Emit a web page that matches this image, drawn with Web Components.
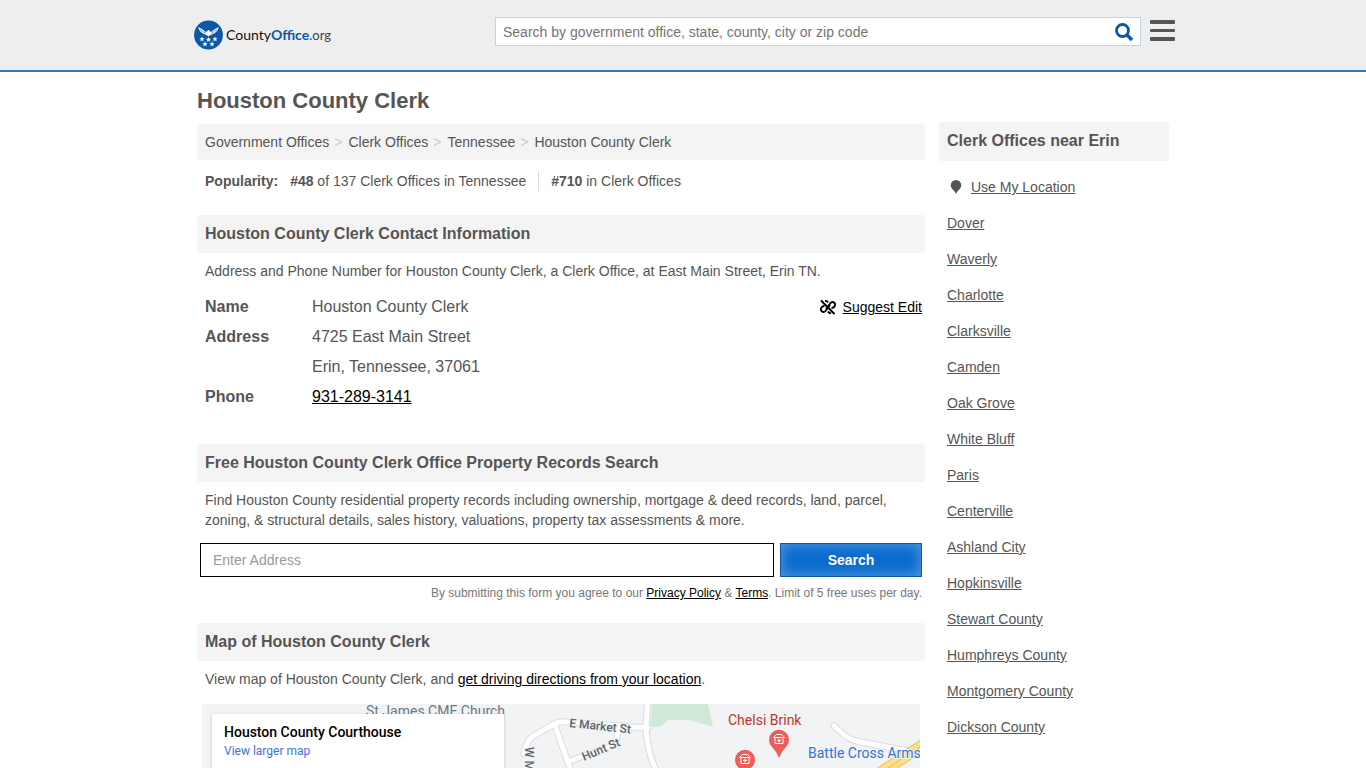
<!DOCTYPE html>
<html lang="en">
<head>
<meta charset="utf-8">
<meta name="viewport" content="width=device-width, initial-scale=1">
<title>Houston County Clerk</title>
<style>
  body {
    margin: 0;
    background: #fff;
    color: #555;
    font: 14px/20px "Liberation Sans", Arial, sans-serif;
  }

  .page {
    max-width: 972px;
    margin: 0 auto;
    display: flex;
    align-items: flex-start;
    gap: 14px;
  }

  main {
    flex: 1;
    min-width: 0;
  }

  h1 {
    margin: 0;
    padding: 15px 0 9px;
    font-size: 22px;
    line-height: 28px;
  }

  p {
    margin: 0;
    padding: 8px 8px 0;
  }

  a {
    color: #000;
  }

  @media (max-width: 768px) {
    .page {
      display: block;
      padding: 0 8px;
    }
  }
</style>
</head>
<body>
<site-header></site-header>

<div class="page">
  <main>
    <h1>Houston County Clerk</h1>
    <bread-crumbs></bread-crumbs>
    <office-rank></office-rank>

    <info-section heading="Houston County Clerk Contact Information">
      <p>Address and Phone Number for Houston County Clerk, a Clerk Office, at East Main Street, Erin TN.</p>
      <contact-card></contact-card>
    </info-section>

    <info-section heading="Free Houston County Clerk Office Property Records Search">
      <p>Find Houston County residential property records including ownership, mortgage &amp; deed records, land, parcel, zoning, &amp; structural details, sales history, valuations, property tax assessments &amp; more.</p>
      <record-search></record-search>
    </info-section>

    <info-section heading="Map of Houston County Clerk">
      <p>View map of Houston County Clerk, and <a href="#directions">get driving directions from your location</a>.</p>
      <office-map></office-map>
    </info-section>
  </main>

  <nearby-offices heading="Clerk Offices near Erin"></nearby-offices>
</div>

<script>
class SiteHeader extends HTMLElement {
  constructor() {
    super();
    this.attachShadow({ mode: "open" });
    this.shadowRoot.innerHTML = `
    <style>
      :host {
        display: block;
        background: #eee;
        border-bottom: 2px solid #337ab7;
      }

      .bar {
        max-width: 984px;
        height: 70px;
        margin: 0 auto;
        display: flex;
        align-items: flex-start;
      }

      .logo {
        flex: 1;
        display: flex;
        align-items: center;
        gap: 3px;
        padding: 20px 0 0 3px;
        color: #111;
        font-family: Lato, sans-serif;
        font-size: 14px;
        text-decoration: none;
      }

      .logo b {
        color: #0b57a8;
        font-weight: 700;
      }

      .logo i {
        color: #444;
        font-size: 13px;
        font-style: normal;
        font-weight: 400;
      }

      form {
        flex: 0 1 646px;
        box-sizing: border-box;
        height: 29px;
        margin-top: 17px;
        display: flex;
        align-items: center;
        background: #fff;
        border: 1px solid #bcd6ea;
      }

      input {
        flex: 1;
        min-width: 0;
        padding: 0 7px;
        border: 0;
        outline: 0;
        background: none;
        font: inherit;
      }

      input::placeholder {
        color: #757575;
        opacity: 1;
      }

      button {
        padding: 0;
        border: 0;
        background: none;
        cursor: pointer;
      }

      svg {
        display: block;
      }

      form button {
        margin-right: 6px;
      }

      .menu {
        margin: 19px 0 0 8px;
      }
    </style>

    <header class="bar">
      <a class="logo" href="#home">
        <svg width="29" height="30" viewBox="0 0 29 30">
          <circle cx="14.5" cy="15" r="14.4" fill="#0b57a8"/>
          <path fill="#fff" d="M4.300 7C6.500 8.500 9.500 9 11.500 12L13.300 11.300 14 10H15L15.700 11.300 17.500 12C19.500 9 22.500 8.500 24.700 7 24.200 10 22.500 12.500 19.500 13.800L17 14.800 14.500 16.200 12 14.800 9.500 13.800C6.500 12.500 4.800 10 4.300 7z"/>
          <path stroke="#0b57a8" stroke-width=".6" fill="none" d="M6 9.500l6 4M23 9.500l-6 4"/>
          <defs><path id="star" d="M0-2.700l.7 1.900h2l-1.600 1.200.6 2-1.700-1.200-1.700 1.200.6-2-1.600-1.200h2z"/></defs>
          <g fill="#fff">
            <use href="#star" x="8" y="19"/><use href="#star" x="14.500" y="19.500"/><use href="#star" x="21" y="19"/>
            <use href="#star" x="11" y="24"/><use href="#star" x="18" y="24"/>
          </g>
        </svg>
        <span>County<b>Office</b><i>.org</i></span>
      </a>
      <form role="search">
        <input type="text" aria-label="Search" placeholder="Search by government office, state, county, city or zip code">
        <button aria-label="Search">
          <svg width="20" height="20" viewBox="0 0 20 20" fill="none" stroke="#0b57a8">
            <circle cx="8.500" cy="8.500" r="6" stroke-width="2.800"/>
            <path d="M13 13l5 5" stroke-width="3.400"/>
          </svg>
        </button>
      </form>
      <button class="menu" aria-label="Menu">
        <svg width="26" height="23" viewBox="0 0 26 23" fill="#555">
          <rect x="1" y="1" width="25" height="4" rx="1"/><rect x="1" y="10" width="25" height="3" rx="1"/><rect x="1" y="18" width="25" height="4" rx="1"/>
        </svg>
      </button>
    </header>`;
  }
}

class BreadCrumbs extends HTMLElement {
  constructor() {
    super();
    this.attachShadow({ mode: "open" });
    this.shadowRoot.innerHTML = `
    <style>
      :host {
        display: block;
        padding: 8px;
        background: #f4f4f4;
        border-radius: 3px;
      }

      ol {
        margin: 0;
        padding: 0;
        list-style: none;
        display: flex;
        flex-wrap: wrap;
      }

      li + li::before {
        content: ">";
        padding: 0 6px 0 5px;
        color: #ccc;
      }

      a {
        color: inherit;
        text-decoration: none;
      }
    </style>
    <nav aria-label="Breadcrumb">
      <ol>
        <li><a href="#offices">Government Offices</a></li>
        <li><a href="#clerks">Clerk Offices</a></li>
        <li><a href="#tennessee">Tennessee</a></li>
        <li><a href="#houston">Houston County Clerk</a></li>
      </ol>
    </nav>`;
  }
}

class OfficeRank extends HTMLElement {
  constructor() {
    super();
    this.attachShadow({ mode: "open" });
    this.shadowRoot.innerHTML = `
    <style>
      :host {
        display: flex;
        flex-wrap: wrap;
        padding: 11px 8px 24px;
      }

      span {
        padding: 0 12px;
      }

      span + span {
        border-left: 1px solid #ddd;
      }
    </style>
    <b>Popularity:</b>
    <span><b>#48</b> of 137 Clerk Offices in Tennessee</span>
    <span><b>#710</b> in Clerk Offices</span>`;
  }
}

// heading bar with slotted content below it
class InfoSection extends HTMLElement {
  constructor() {
    super();
    this.attachShadow({ mode: "open" });
    this.shadowRoot.innerHTML = `
    <style>
      :host {
        display: block;
      }

      h2 {
        margin: 0;
        padding: 9px 8px;
        background: #f4f4f4;
        border-radius: 3px;
        font-size: 16px;
        line-height: 20px;
      }
    </style>
    <section>
      <h2>${this.getAttribute("heading")}</h2>
      <slot></slot>
    </section>`;
  }
}

class ContactCard extends HTMLElement {
  constructor() {
    super();
    this.attachShadow({ mode: "open" });
    this.shadowRoot.innerHTML = `
    <style>
      :host {
        display: flex;
        justify-content: space-between;
        align-items: flex-start;
        padding: 11px 3px 32px 8px;
        line-height: 30px;
      }

      table {
        border-collapse: collapse;
        font-size: 16px;
      }

      th, td {
        padding: 0;
        text-align: left;
        vertical-align: top;
      }

      th {
        width: 107px;
      }

      a {
        color: #000;
      }

      .edit {
        display: flex;
        align-items: center;
        gap: 7px;
      }
    </style>
    <table>
      <tr><th scope="row">Name</th><td>Houston County Clerk</td></tr>
      <tr><th scope="row">Address</th><td>4725 East Main Street<br>Erin, Tennessee, 37061</td></tr>
      <tr><th scope="row">Phone</th><td><a href="tel:931-289-3141">931-289-3141</a></td></tr>
    </table>
    <div class="edit">
      <svg width="16" height="16" viewBox="0 0 16 16" fill="none" stroke="#000" stroke-width="1.900">
        <path d="M1 1.500l13.500 13.500"/>
        <path d="M6 10L10.500 4a2.600 2.600 0 0 1 4 3.400Q13.500 9 11.500 9M10 6L5.500 12a2.600 2.600 0 0 1-4-3.400Q2.500 7 4.500 7M5 2Q7 1.500 8 3.500M8 12.500Q9 14.500 11 14"/>
      </svg>
      <a href="#edit">Suggest Edit</a>
    </div>`;
  }
}

class RecordSearch extends HTMLElement {
  constructor() {
    super();
    this.attachShadow({ mode: "open" });
    this.shadowRoot.innerHTML = `
    <style>
      :host {
        display: block;
        padding: 13px 3px 20px;
      }

      form {
        display: flex;
        gap: 6px;
      }

      input {
        flex: 1;
        min-width: 0;
        box-sizing: border-box;
        height: 34px;
        padding: 0 12px;
        border: 1px solid #000;
        font: inherit;
      }

      input::placeholder {
        color: #999;
        opacity: 1;
      }

      button {
        width: 142px;
        height: 34px;
        border: 1px solid #1558a0;
        background: #0a6bce;
        box-shadow: inset 0 0 14px #5a9ee0;
        color: #fff;
        font: inherit;
        font-weight: bold;
      }

      small {
        display: block;
        padding-top: 6px;
        color: #777;
        font-size: 12px;
        text-align: right;
      }

      a {
        color: #000;
      }
    </style>
    <form>
      <input type="text" aria-label="Address" placeholder="Enter Address">
      <button>Search</button>
    </form>
    <small>By submitting this form you agree to our <a href="#privacy">Privacy Policy</a> &amp; <a href="#terms">Terms</a>. Limit of 5 free uses per day.</small>`;
  }
}

class OfficeMap extends HTMLElement {
  constructor() {
    super();
    this.attachShadow({ mode: "open" });
    this.shadowRoot.innerHTML = `
    <style>
      :host {
        display: block;
        position: relative;
        margin: 15px 5px 0;
        font-family: Roboto, sans-serif;
      }

      svg {
        display: block;
        width: 100%;
        background: #f1f3f4;
      }

      text {
        font-size: 14px;
        paint-order: stroke;
        stroke: #f1f3f4;
        stroke-width: 2px;
      }

      .street {
        fill: #5f6368;
        font-size: 12px;
        font-weight: 500;
      }

      .place {
        position: absolute;
        top: 10px;
        left: 10px;
        box-sizing: border-box;
        width: 292px;
        height: 106px;
        padding: 9px 12px;
        background: #fff;
        box-shadow: 0 1px 3px rgba(0, 0, 0, 0.2);
        color: #000;
      }

      .place b {
        display: block;
        font-weight: 500;
        line-height: 18px;
      }

      .place a {
        display: block;
        color: #4272db;
        font-size: 12px;
        line-height: 20px;
        text-decoration: none;
      }
    </style>
    <svg viewBox="0 0 718 300">
      <defs>
        <g id="roads">
          <path d="M322 50Q325 36 330 33L352 20Q357 17 364 18L446 24M353 21L358 36 368 64 392 130M368 57L414 40 416 26"/>
          <path d="M446-6L444 23Q445 46 453 64L470 130"/>
          <path d="M632 22L641 30Q648 36 658 38L712 48"/>
        </g>
        <g id="pin">
          <path fill="#ea5f59" d="M0 19Q-2 13-7 8A10 10 0 1 1 7 8Q2 13 0 19z"/>
          <path fill="none" stroke="#fff" d="M-4-1.500V4.500H4V-1.500M-5.500-1.500L-2.500-4.500H2.500L5.500-1.500zM-2 1.500H2M0-.5V3.500"/>
        </g>
      </defs>
      <path fill="#ceead6" d="M450 0H506L511 23 488 16H466L458 23H448z"/>
      <g fill="none" stroke-linecap="round">
        <use href="#roads" stroke="#dadce0" stroke-width="7"/>
        <use href="#roads" stroke="#fff" stroke-width="5"/>
        <path stroke="#edc55c" stroke-width="12" d="M640 94L730 35"/>
        <path stroke="#fddf87" stroke-width="10" d="M640 94L730 35"/>
        <path stroke="#e8bd52" d="M640 94L730 35"/>
      </g>
      <text x="164" y="12" fill="#6b7a86">St James CME Church</text>
      <text class="street" transform="translate(367 23) rotate(6)">E Market St</text>
      <text class="street" transform="translate(382 57) rotate(-23)">Hunt St</text>
      <text class="street" transform="translate(323 43) rotate(90)">W Main St</text>
      <text x="526" y="21" fill="#c5352d">Chelsi Brink</text>
      <text x="606" y="54" fill="#3577d4">Battle Cross Arms</text>
      <use href="#pin" x="577" y="35"/>
      <use href="#pin" x="543" y="55"/>
    </svg>
    <div class="place">
      <b>Houston County Courthouse</b>
      <a href="#map">View larger map</a>
    </div>`;
  }
}

class NearbyOffices extends HTMLElement {
  constructor() {
    super();
    this.attachShadow({ mode: "open" });

    const places = [
      "Dover", "Waverly", "Charlotte", "Clarksville", "Camden", "Oak Grove",
      "White Bluff", "Paris", "Centerville", "Ashland City", "Hopkinsville",
      "Stewart County", "Humphreys County", "Montgomery County", "Dickson County",
    ];

    this.shadowRoot.innerHTML = `
    <style>
      :host {
        display: block;
        flex: 0 0 230px;
        padding-top: 50px;
      }

      h2 {
        margin: 0;
        padding: 9px 8px 10px;
        background: #f4f4f4;
        border-radius: 3px;
        font-size: 16px;
        line-height: 20px;
      }

      ul {
        margin: 0;
        padding: 8px;
        list-style: none;
        line-height: 36px;
      }

      a {
        color: inherit;
      }

      .locate {
        display: flex;
        align-items: center;
        gap: 9px;
        padding-left: 3px;
      }
    </style>
    <aside>
      <h2>${this.getAttribute("heading")}</h2>
      <ul>
        <li class="locate">
          <svg width="12" height="14" viewBox="0 0 12 14"><path fill="#555" d="M6 14C5 11 .7 8.500.7 5.200a5.300 5.200 0 0 1 10.600 0C11.300 8.500 7 11 6 14z"/></svg>
          <a href="#locate">Use My Location</a>
        </li>
        ${places.map((name) => `<li><a href="#near">${name}</a></li>`).join("")}
      </ul>
    </aside>`;
  }
}

customElements.define("site-header", SiteHeader);
customElements.define("bread-crumbs", BreadCrumbs);
customElements.define("office-rank", OfficeRank);
customElements.define("info-section", InfoSection);
customElements.define("contact-card", ContactCard);
customElements.define("record-search", RecordSearch);
customElements.define("office-map", OfficeMap);
customElements.define("nearby-offices", NearbyOffices);
</script>
</body>
</html>
